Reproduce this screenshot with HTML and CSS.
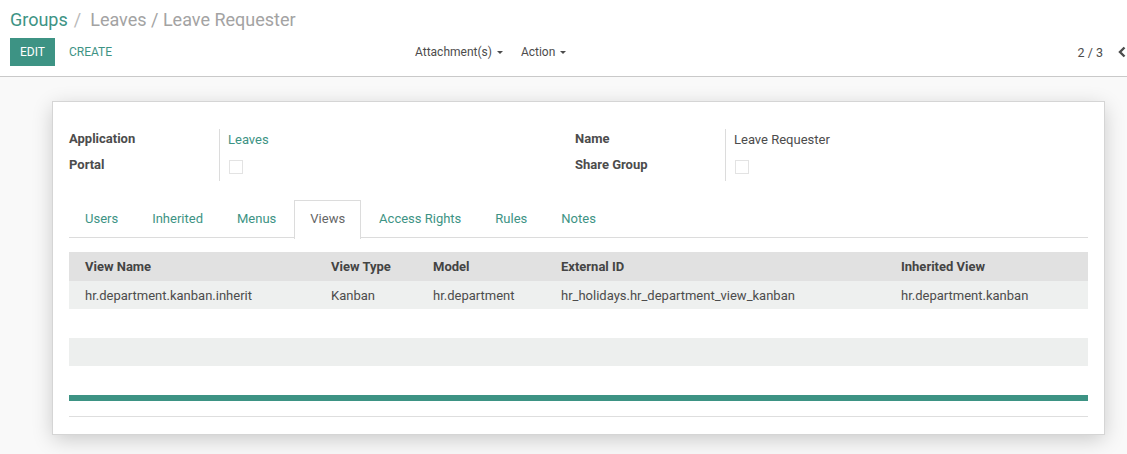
FILE: index.html
```html
<!DOCTYPE html>
<html>
<head>
<meta charset="utf-8">
<link rel="stylesheet" href="styles.css">
</head>
<body>
<div class="cp">
  <div class="crumbs"><span class="crumb-link">Groups</span><span class="crumb-sep">/</span><span class="crumb-cur">Leaves / Leave Requester</span></div>
  <div class="cp-row">
    <div class="cp-buttons">
      <span class="btn-primary">EDIT</span>
      <span class="btn-link">CREATE</span>
    </div>
    <div class="cp-sidebar">
      <span class="dd">Attachment(s) <span class="caret"></span></span>
      <span class="dd">Action <span class="caret"></span></span>
    </div>
    <div class="cp-pager">
      <span class="pager-val">2 / 3</span>
      <svg class="pager-arrow" width="8" height="12" viewBox="0 0 8 12"><path d="M6.5 1.5 L2 6 L6.5 10.5" fill="none" stroke="#4c4c4c" stroke-width="2.4"/></svg>
    </div>
  </div>
</div>
<div class="content">
  <div class="sheet">
    <div class="groups">
      <div class="group">
        <div class="g-labels">
          <div class="g-label">Application</div>
          <div class="g-label">Portal</div>
        </div>
        <div class="g-values">
          <div class="g-value link">Leaves</div>
          <div class="g-value"><span class="checkbox"></span></div>
        </div>
      </div>
      <div class="group group-right">
        <div class="g-labels">
          <div class="g-label">Name</div>
          <div class="g-label">Share Group</div>
        </div>
        <div class="g-values">
          <div class="g-value">Leave Requester</div>
          <div class="g-value"><span class="checkbox"></span></div>
        </div>
      </div>
    </div>
    <div class="tabs">
      <span class="tab">Users</span>
      <span class="tab">Inherited</span>
      <span class="tab">Menus</span>
      <span class="tab active">Views</span>
      <span class="tab">Access Rights</span>
      <span class="tab">Rules</span>
      <span class="tab">Notes</span>
    </div>
    <table class="list">
      <colgroup>
        <col class="c1"><col class="c2"><col class="c3"><col class="c4"><col class="c5">
      </colgroup>
      <thead>
        <tr><th>View Name</th><th>View Type</th><th>Model</th><th>External ID</th><th>Inherited View</th></tr>
      </thead>
      <tbody>
        <tr><td>hr.department.kanban.inherit</td><td>Kanban</td><td>hr.department</td><td>hr_holidays.hr_department_view_kanban</td><td>hr.department.kanban</td></tr>
      </tbody>
    </table>
    <div class="empty-bar"></div>
    <div class="teal-bar"></div>
    <div class="thin-line"></div>
  </div>
</div>
</body>
</html>
```
FILE: styles.css
```css
html, body {
  margin: 0;
  padding: 0;
}
body {
  font-family: Roboto, "Noto Sans", sans-serif;
  font-size: 13px;
  color: #4c4c4c;
  background: #f9f9f9;
  width: 1127px;
  height: 454px;
  overflow: hidden;
}
.cp {
  background: #fff;
  border-bottom: 1px solid #c9c9c9;
  height: 77px;
  box-sizing: border-box;
  padding: 8px 0 0 10px;
}
.crumbs {
  font-size: 18px;
  line-height: 24px;
  height: 24px;
}
.crumb-link { color: #3d9384; }
.crumb-sep { color: #b9b9b9; margin: 0 9px 0 6px; }
.crumb-cur { color: #a3a3a3; }
.cp-row {
  display: flex;
  align-items: center;
  margin-top: 6px;
  height: 28px;
}
.cp-buttons {
  width: 405px;
  display: flex;
  align-items: center;
}
.btn-primary {
  background: #3d9384;
  color: #fff;
  font-size: 12px;
  height: 28px;
  line-height: 28px;
  width: 45px;
  text-align: center;
  box-sizing: border-box;
}
.btn-link {
  color: #3d9384;
  font-size: 12px;
  margin-left: 14px;
}
.cp-sidebar {
  display: flex;
  gap: 18px;
  font-size: 12px;
  color: #4c4c4c;
}
.caret {
  display: inline-block;
  width: 0;
  height: 0;
  border-left: 3.5px solid transparent;
  border-right: 3.5px solid transparent;
  border-top: 3.5px solid #4c4c4c;
  vertical-align: middle;
  margin-left: 2px;
}
.cp-pager {
  margin-left: auto;
  display: flex;
  align-items: center;
  gap: 0;
}
.pager-val {
  font-size: 12.5px;
  margin-right: 15px;
}
.pager-arrow {
  margin-right: 1px;
}
.content {
  padding-top: 24px;
}
.sheet {
  margin-left: 52px;
  width: 1053px;
  height: 334px;
  box-sizing: border-box;
  background: #fff;
  border: 1px solid #d5d5d5;
  box-shadow: 0 5px 20px -1px rgba(0,0,0,0.2);
  padding: 27px 16px 0 16px;
}
.groups {
  display: flex;
  height: 52px;
}
.group {
  display: flex;
  width: 506px;
}
.group-right {
  width: auto;
}
.g-labels {
  width: 150px;
  font-weight: bold;
  color: #4c4c4c;
}
.g-label {
  height: 26px;
  line-height: 20px;
}
.g-values {
  border-left: 1px solid #dcdcdc;
  padding-left: 8px;
  height: 52px;
  box-sizing: border-box;
  padding-top: 0;
}
.g-value {
  height: 26px;
  line-height: 22px;
}
.g-value.link { color: #3d9384; }
.checkbox {
  display: inline-block;
  width: 14px;
  height: 14px;
  border: 1px solid #e3e3e3;
  box-sizing: border-box;
  margin-top: 5px;
  margin-left: 1px;
}
.tabs {
  display: flex;
  margin-top: 19px;
  border-bottom: 1px solid #dcdcdc;
  height: 38px;
  box-sizing: border-box;
}
.tab {
  display: block;
  padding: 10px 15px 0 15px;
  height: 38px;
  box-sizing: border-box;
  border: 1px solid transparent;
  border-bottom: none;
  margin-right: 2px;
  color: #3d9384;
  line-height: 16px;
}
.tab.active {
  color: #666;
  background: #fff;
  border-color: #dcdcdc;
  height: 39px;
}
.list {
  margin-top: 14px;
  width: 1019px;
  border-collapse: collapse;
  table-layout: fixed;
}
.c1 { width: 246px; }
.c2 { width: 102px; }
.c3 { width: 128px; }
.c4 { width: 340px; }
.c5 { width: 203px; }
.list th {
  background: #e1e1e1;
  text-align: left;
  font-weight: bold;
  color: #444;
  height: 29px;
  padding: 0 0 0 16px;
  white-space: nowrap;
}
.list td {
  background: #eef0ef;
  height: 28px;
  padding: 0 0 0 16px;
  white-space: nowrap;
  color: #4c4c4c;
}
.empty-bar {
  margin-top: 29px;
  height: 28px;
  background: #edefee;
}
.teal-bar {
  margin-top: 29px;
  height: 6px;
  background: #3d9384;
}
.thin-line {
  margin-top: 15px;
  height: 1px;
  background: #dedede;
}
```
